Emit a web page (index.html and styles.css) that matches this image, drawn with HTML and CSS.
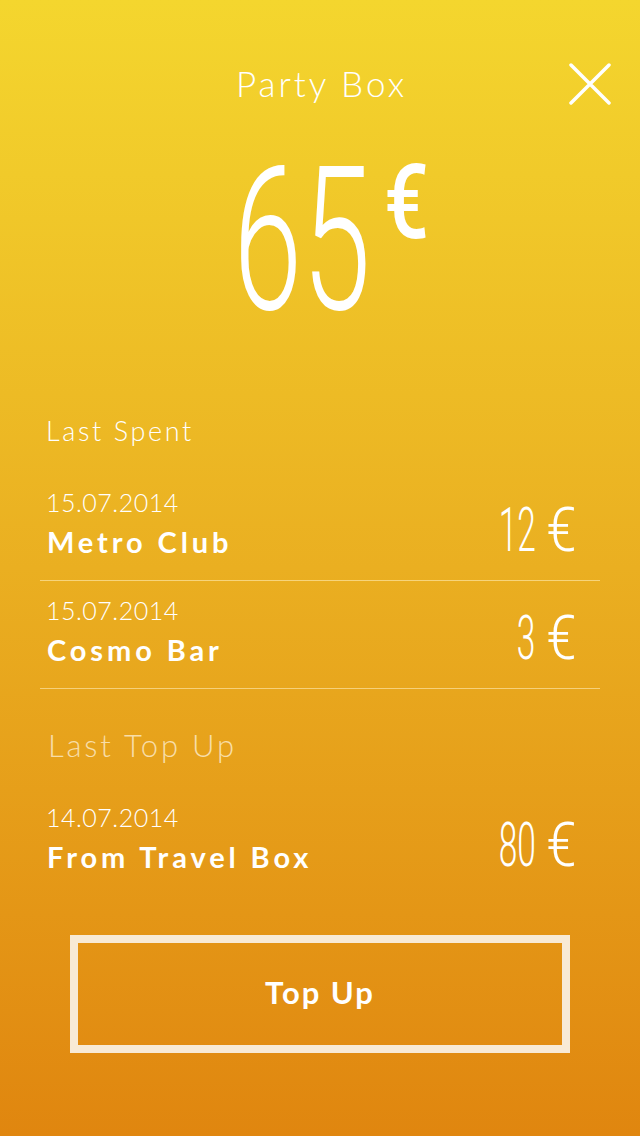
FILE: index.html
```html
<!DOCTYPE html>
<html lang="en">
<head>
<meta charset="utf-8">
<title>Party Box</title>
<link rel="stylesheet" href="styles.css">
</head>
<body>
<main class="screen">
  <header class="top">
    <span class="spacer"></span>
    <h1 class="title">Party Box</h1>
    <button class="close" aria-label="Close">
      <svg viewBox="0 0 42 42" width="42" height="42"><path d="M2 2 L40 40 M40 2 L2 40" stroke="#fff" stroke-width="3.5" stroke-linecap="round" fill="none"/></svg>
    </button>
  </header>

  <div class="balance">
    <span class="big">65</span><span class="cur">€</span>
  </div>

  <section class="group">
    <h2 class="label">Last Spent</h2>
    <ul class="list">
      <li class="row">
        <div class="info"><div class="date">15.07.2014</div><div class="name">Metro Club</div></div>
        <div class="amt"><span class="digits">12</span><span class="euro">€</span></div>
      </li>
      <li class="row">
        <div class="info"><div class="date">15.07.2014</div><div class="name">Cosmo Bar</div></div>
        <div class="amt"><span class="digits">3</span><span class="euro">€</span></div>
      </li>
    </ul>
  </section>

  <section class="group topgroup">
    <h2 class="label muted">Last Top Up</h2>
    <ul class="list">
      <li class="row plain">
        <div class="info"><div class="date">14.07.2014</div><div class="name">From Travel Box</div></div>
        <div class="amt"><span class="digits">80</span><span class="euro">€</span></div>
      </li>
    </ul>
  </section>

  <div class="actions">
    <button class="topup">Top Up</button>
  </div>
</main>
</body>
</html>
```

FILE: styles.css
```css
* { box-sizing: border-box; }
html, body { margin: 0; padding: 0; }
body { width: 640px; height: 1136px; overflow: hidden; }

.screen {
  width: 640px;
  height: 1136px;
  background: linear-gradient(180deg, #f4d62e 0%, #eaaf21 50%, #e0860f 100%);
  color: #fff;
  font-family: "Lato", "Open Sans", sans-serif;
  display: flex;
  flex-direction: column;
}

.top {
  display: grid;
  grid-template-columns: 1fr auto 1fr;
  align-items: center;
  padding-top: 60px;
  height: 106px;
}
.title {
  margin: 0;
  font-size: 35px;
  font-weight: 300;
  letter-spacing: 3px;
  line-height: 44px;
  padding-left: 3px;
}
.close {
  justify-self: end;
  margin-right: 29px;
  margin-top: 2px;
  width: 42px;
  height: 42px;
  padding: 0;
  border: 0;
  background: none;
  display: flex;
}

.balance {
  display: flex;
  justify-content: center;
  align-items: flex-start;
  height: 305px;
  padding-top: 35px;
  padding-right: 48px;
}
.big {
  font-family: "Roboto", sans-serif;
  font-weight: 350;
  font-size: 200px;
  line-height: 200px;
  display: inline-block;
  transform: scaleX(0.62);
  transform-origin: right top;
}
.cur {
  font-family: "Roboto", sans-serif;
  font-weight: 500;
  font-size: 104px;
  line-height: 104px;
  display: inline-block;
  transform: scaleX(0.76);
  transform-origin: left top;
  margin-left: 14px;
  margin-top: 10px;
}

.group { padding: 0 40px; }
.label {
  margin: 0;
  padding-left: 6px;
  font-size: 27px;
  font-weight: 300;
  letter-spacing: 2.6px;
  line-height: 40px;
}
.label.muted {
  color: rgba(255, 246, 225, 0.72);
  padding-left: 8px;
  font-size: 31px;
  letter-spacing: 2.8px;
}

.list { list-style: none; margin: 0; padding: 0; margin-top: 30px; }
.row {
  display: flex;
  justify-content: space-between;
  align-items: flex-end;
  height: 108px;
  padding: 0 24px 20px 6px;
  border-bottom: 1px solid rgba(255, 236, 185, 0.6);
}
.list .row:first-child { height: 100px; }
.row.plain { border-bottom: 0; }
.date {
  font-size: 25px;
  font-weight: 300;
  line-height: 30px;
  letter-spacing: 0.5px;
  margin-bottom: 7px;
}
.name {
  font-size: 29px;
  font-weight: 700;
  line-height: 36px;
  letter-spacing: 3.9px;
  padding-left: 1px;
}
.amt {
  display: flex;
  align-items: flex-end;
  font-family: "Roboto", sans-serif;
  font-size: 62px;
  line-height: 62px;
  margin-bottom: -1px;
}
.digits {
  display: inline-block;
  font-weight: 350;
  transform: scaleX(0.54);
  transform-origin: right bottom;
}
.euro {
  display: inline-block;
  font-weight: 350;
  transform: scaleX(0.88);
  transform-origin: right bottom;
  margin-left: 6px;
}

.topgroup { margin-top: 36px; }

.actions {
  display: flex;
  justify-content: center;
  margin-top: 40px;
}
.topup {
  width: 500px;
  height: 118px;
  border: 8px solid #f8ead5;
  background: transparent;
  color: #fff;
  font-family: "Lato", "Open Sans", sans-serif;
  font-weight: 700;
  font-size: 31px;
  letter-spacing: 2px;
  padding: 0 0 4px;
}
```
